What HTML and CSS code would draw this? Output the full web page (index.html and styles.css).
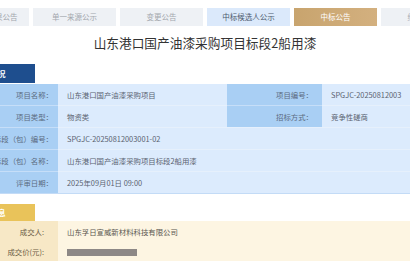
FILE: index.html
```html
<!DOCTYPE html>
<html lang="zh-CN">
<head>
    <meta charset="UTF-8">
    <title>中标公告</title>
    <link rel="stylesheet" href="styles.css">
</head>
<body>
    <div class="page">
        <div class="tabs">
            <div class="tab">资格预审结果公告</div>
            <div class="tab">单一来源公示</div>
            <div class="tab">变更公告</div>
            <div class="tab tab-blue">中标候选人公示</div>
            <div class="tab tab-gold">中标公告</div>
            <div class="tab">终止公告</div>
        </div>

        <h1 class="title">山东港口国产油漆采购项目标段2船用漆</h1>

        <div class="sec-head sec-blue">项目概况</div>
        <table class="info info-blue">
            <colgroup>
                <col class="c-label1">
                <col class="c-value1">
                <col class="c-label2">
                <col class="c-value2">
            </colgroup>
            <tr>
                <th>项目名称：</th>
                <td>山东港口国产油漆采购项目</td>
                <th class="th2">项目编号：</th>
                <td>SPGJC-20250812003</td>
            </tr>
            <tr>
                <th>项目类型：</th>
                <td>物资类</td>
                <th class="th2">招标方式：</th>
                <td>竞争性磋商</td>
            </tr>
            <tr>
                <th>标段（包）编号：</th>
                <td colspan="3">SPGJC-20250812003001-02</td>
            </tr>
            <tr>
                <th>标段（包）名称：</th>
                <td colspan="3">山东港口国产油漆采购项目标段2船用漆</td>
            </tr>
            <tr>
                <th>评审日期：</th>
                <td colspan="3">2025年09月01日 09:00</td>
            </tr>
        </table>

        <div class="sec-head sec-gold">成交信息</div>
        <table class="info info-gold">
            <colgroup>
                <col class="c-label1">
                <col>
            </colgroup>
            <tr>
                <th>成交人:</th>
                <td>山东孚日宣威新材料科技有限公司</td>
            </tr>
            <tr>
                <th>成交价(元):</th>
                <td><span class="hidden-price"></span></td>
            </tr>
        </table>
    </div>
</body>
</html>
```

FILE: styles.css
```css
body {
    margin: 0;
    background: #ffffff;
    font-family: "Noto Sans CJK SC", "Noto Sans", sans-serif;
    color: #555;
    overflow: hidden;
}

.page {
    width: 518px;
    margin-left: -54px;
    padding-top: 8px;
}

/* tab bar */
.tabs {
    display: flex;
    gap: 4px;
}

.tab {
    width: 83px;
    height: 18px;
    line-height: 18px;
    text-align: center;
    font-size: 7.5px;
    background: #eef1f5;
    color: #a3a7ad;
    white-space: nowrap;
    overflow: hidden;
}

.tab-blue {
    background: #dbe9fb;
    color: #4d5b6e;
}

.tab-gold {
    background: linear-gradient(90deg, #c8a46e, #d3b07f);
    color: #ffffff;
}

.title {
    margin: 8px 0 0;
    height: 20px;
    font-size: 12.7px;
    font-weight: normal;
    line-height: 18px;
    text-align: center;
    color: #333;
}

/* section heads */
.sec-head {
    width: 89px;
    height: 19px;
    line-height: 19px;
    text-align: center;
    font-size: 7.5px;
    font-weight: bold;
    color: #fff;
    margin-top: 10px;
}

.sec-blue {
    background: #1e4e8e;
    margin-bottom: 1px;
}

.sec-gold {
    background: #e9c35a;
    height: 17px;
    line-height: 17px;
}

/* info tables */
.info {
    width: 518px;
    border-collapse: collapse;
    table-layout: fixed;
    font-size: 7.4px;
}

.c-label1 { width: 112px; }
.c-value1 { width: 169px; }
.c-label2 { width: 95px; }

.info th,
.info td {
    height: 21px;
    padding: 0;
    font-weight: normal;
    white-space: nowrap;
}

.info th {
    text-align: right;
    padding-right: 5px;
}

.info th.th2 {
    padding-right: 9px;
}

.info td {
    padding-left: 9px;
}

.info-blue {
    border-bottom: 1px solid #c3dbf6;
}

.info-blue th {
    background: #a9cff4;
    color: #5b6b80;
    border-top: 1px solid #c6def8;
}

.info-blue td {
    background: #dcebfd;
    color: #5a6270;
    border-top: 1px solid #e6f0fc;
}

.info-blue tr:first-child th,
.info-blue tr:first-child td {
    border-top: none;
}

.info-gold th,
.info-gold td {
    height: 20px;
}

.info-gold th {
    background: #f7e8c6;
    color: #6b5c45;
    padding-right: 14px;
}

.info-gold td {
    background: #fdf5e2;
    color: #5a5650;
}

.hidden-price {
    display: inline-block;
    width: 70px;
    height: 7px;
    background: #8d8886;
    vertical-align: middle;
}
```
